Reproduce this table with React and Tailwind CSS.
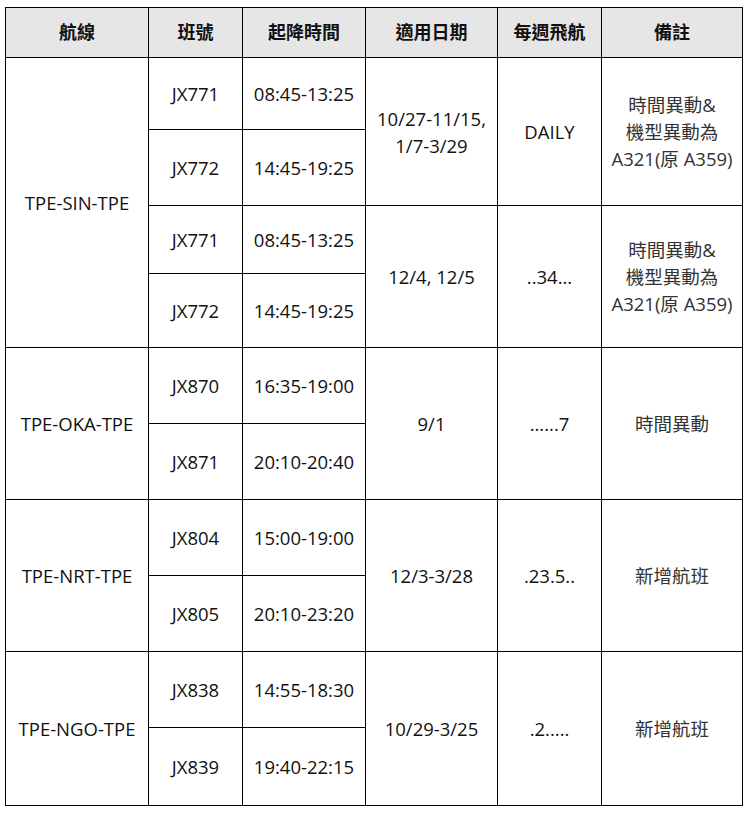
const routes = [
  {
    route: "TPE-SIN-TPE",
    groups: [
      {
        flights: [
          { no: "JX771", time: "08:45-13:25", h: "h-[72px]" },
          { no: "JX772", time: "14:45-19:25", h: "h-[76px]" },
        ],
        dates: ["10/27-11/15,", "1/7-3/29"],
        week: "DAILY",
        note: ["時間異動&", "機型異動為", "A321(原 A359)"],
      },
      {
        flights: [
          { no: "JX771", time: "08:45-13:25", h: "h-[68px]" },
          { no: "JX772", time: "14:45-19:25", h: "h-[74px]" },
        ],
        dates: ["12/4, 12/5"],
        week: "..34...",
        note: ["時間異動&", "機型異動為", "A321(原 A359)"],
      },
    ],
  },
  {
    route: "TPE-OKA-TPE",
    groups: [
      {
        flights: [
          { no: "JX870", time: "16:35-19:00", h: "h-[76px]" },
          { no: "JX871", time: "20:10-20:40", h: "h-[76px]" },
        ],
        dates: ["9/1"],
        week: "......7",
        note: ["時間異動"],
      },
    ],
  },
  {
    route: "TPE-NRT-TPE",
    groups: [
      {
        flights: [
          { no: "JX804", time: "15:00-19:00", h: "h-[76px]" },
          { no: "JX805", time: "20:10-23:20", h: "h-[76px]" },
        ],
        dates: ["12/3-3/28"],
        week: ".23.5..",
        note: ["新增航班"],
      },
    ],
  },
  {
    route: "TPE-NGO-TPE",
    groups: [
      {
        flights: [
          { no: "JX838", time: "14:55-18:30", h: "h-[76px]" },
          { no: "JX839", time: "19:40-22:15", h: "h-[78px]" },
        ],
        dates: ["10/29-3/25"],
        week: ".2.....",
        note: ["新增航班"],
      },
    ],
  },
];

const cell = "border border-black text-center align-middle px-0.5";

export default function App() {
  return (
    <div
      className="bg-white min-h-screen pt-[7px] pl-[5px] text-[18.5px] leading-[27px] text-[#111]"
      style={{ fontFamily: '"Open Sans", "Noto Sans CJK TC", sans-serif' }}
    >
      <table className="border-collapse table-fixed w-[737px]">
        <colgroup>
          <col className="w-[143px]" />
          <col className="w-[94px]" />
          <col className="w-[123px]" />
          <col className="w-[132px]" />
          <col className="w-[104px]" />
          <col className="w-[141px]" />
        </colgroup>
        <thead>
          <tr className="h-[50px] bg-[#e7e6e6] font-bold text-[18px]">
            <th className={cell}>航線</th>
            <th className={cell}>班號</th>
            <th className={cell}>起降時間</th>
            <th className={cell}>適用日期</th>
            <th className={cell}>每週飛航</th>
            <th className={cell}>備註</th>
          </tr>
        </thead>
        <tbody>
          {routes.map((r) => {
            const total = r.groups.reduce((n, g) => n + g.flights.length, 0);
            return r.groups.map((g, gi) =>
              g.flights.map((f, fi) => (
                <tr key={r.route + gi + fi} className={f.h}>
                  {gi === 0 && fi === 0 && (
                    <td rowSpan={total} className={cell}>
                      {r.route}
                    </td>
                  )}
                  <td className={cell}>{f.no}</td>
                  <td className={cell}>{f.time}</td>
                  {fi === 0 && (
                    <>
                      <td rowSpan={g.flights.length} className={cell}>
                        {g.dates.map((d) => (
                          <div key={d}>{d}</div>
                        ))}
                      </td>
                      <td rowSpan={g.flights.length} className={cell}>
                        {g.week}
                      </td>
                      <td rowSpan={g.flights.length} className={cell + " text-[#333]"}>
                        {g.note.map((n) => (
                          <div key={n}>{n}</div>
                        ))}
                      </td>
                    </>
                  )}
                </tr>
              ))
            );
          })}
        </tbody>
      </table>
    </div>
  );
}
